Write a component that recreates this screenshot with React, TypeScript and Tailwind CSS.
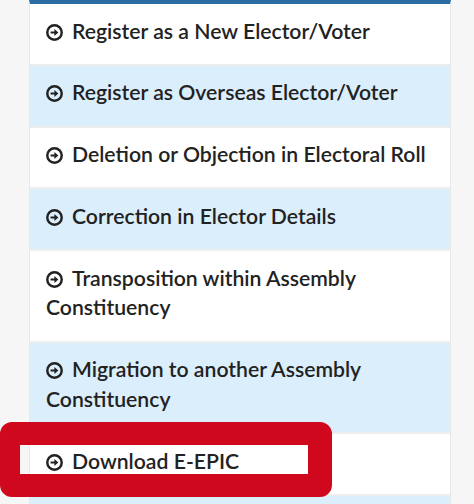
import React from 'react';

const items = [
  'Register as a New Elector/Voter',
  'Register as Overseas Elector/Voter',
  'Deletion or Objection in Electoral Roll',
  'Correction in Elector Details',
  'Transposition within Assembly Constituency',
  'Migration to another Assembly Constituency',
  'Download E-EPIC',
];

const CircleArrow = () => (
  <svg
    viewBox="0 0 16 16"
    width={17}
    height={17}
    className="inline-block align-[-2px] mr-[9px]"
    fill="none"
  >
    <circle cx="8" cy="8" r="6.8" stroke="currentColor" strokeWidth="2.3" />
    <path d="M4.3 7h3.6V4.6L11.6 8 7.9 11.4V9H4.3z" fill="currentColor" />
  </svg>
);

export default function App() {
  return (
    <div className="relative h-[504px] w-[474px] overflow-hidden bg-[#f6f6f6] font-['Lato',sans-serif]">
      <ul className="ml-[29px] w-[422px] border-t-[4px] border-x border-t-[#2b6ca3] border-x-[#e8e8e8]">
        {items.map((t, i) => (
          <li
            key={t}
            className={`border-b-[2px] border-[#eeeeee] px-[16px] pt-[12.5px] pb-[17.5px] text-[21.2px] font-semibold leading-[29.75px] text-[#222222] ${
              i % 2 === 1 ? 'bg-[#dbeefc]' : 'bg-white'
            }`}
          >
            <CircleArrow />
            {t}
          </li>
        ))}
        {/* next row, cut off by the window */}
        <li className="h-[60px] bg-[#dbeefc]" />
      </ul>
      <div className="absolute left-0 top-[422px] h-[75px] w-[332px] rounded-[12px] border-y-[23px] border-l-[20px] border-r-[24px] border-[#d0081e]" />
    </div>
  );
}
